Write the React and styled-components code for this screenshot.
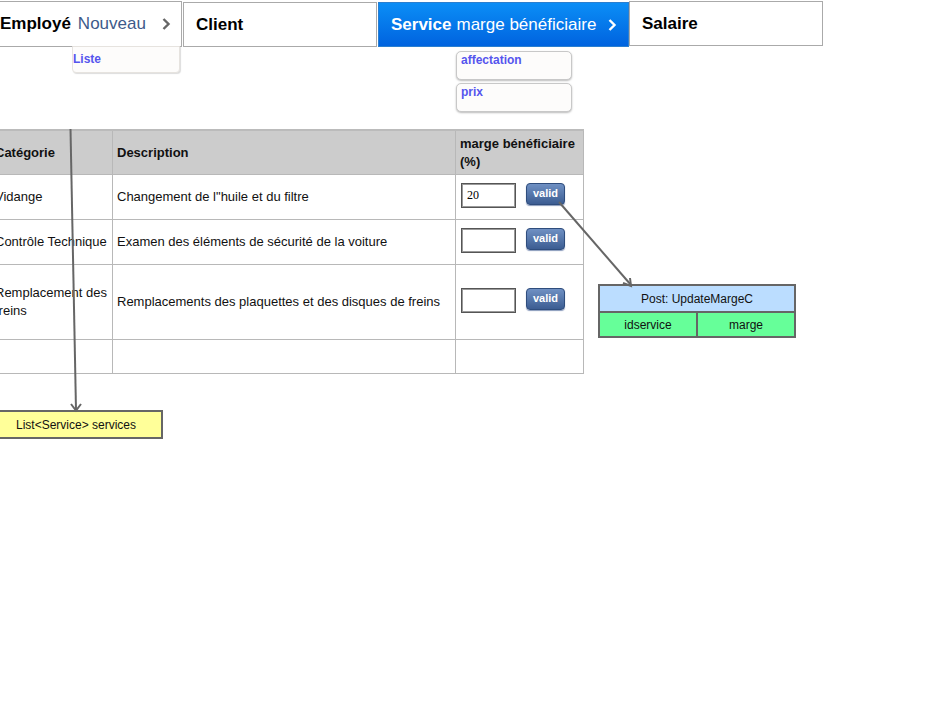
import styled, { createGlobalStyle } from 'styled-components'

const GlobalStyle = createGlobalStyle`
  html, body {
    margin: 0;
    padding: 0;
    background: #ffffff;
    font-family: "Liberation Sans", Arial, sans-serif;
  }
`

const Page = styled.div`
  position: relative;
  width: 930px;
  height: 716px;
  overflow: hidden;
`

const Shift = styled.div`
  margin-left: -12px;
`

const TabBar = styled.div`
  display: flex;
  align-items: flex-start;
  padding-top: 1px;
`

const Tab = styled.div`
  position: relative;
  box-sizing: border-box;
  flex-shrink: 0;
  display: flex;
  align-items: center;
  white-space: nowrap;
  width: ${(p) => p.$width}px;
  height: ${(p) => p.$height || 45}px;
  margin-top: ${(p) => p.$top || 0}px;
  margin-left: ${(p) => p.$gap || 0}px;
  padding: 0 ${(p) => p.$pad || 12}px;
  border: 1px solid ${(p) => (p.$active ? '#2a7fd0' : '#aaaaaa')};
  background: ${(p) =>
    p.$active ? 'linear-gradient(to bottom, #0b8ef6, #0063df)' : '#ffffff'};
  color: ${(p) => (p.$active ? '#ffffff' : '#000000')};
  font-size: 17px;
`

const Strong = styled.span`
  flex-shrink: 0;
  font-weight: bold;
`

const Sub = styled.span`
  flex-shrink: 0;
  color: ${(p) => (p.$light ? '#ffffff' : '#3d5a8a')};
  margin-left: ${(p) => (p.$light ? 5 : 7)}px;
`

const Chevron = styled.svg`
  flex-shrink: 0;
  margin-left: auto;
  margin-right: -1px;
`

const Menu = styled.div`
  position: absolute;
  left: ${(p) => p.$left}px;
  top: ${(p) => p.$top}px;
  display: flex;
  flex-direction: column;
  gap: 3px;
  z-index: 2;
`

const MenuItem = styled.div`
  box-sizing: border-box;
  width: ${(p) => p.$width}px;
  height: ${(p) => p.$height}px;
  padding: ${(p) => (p.$flat ? '5px 0 0' : '1px 4px')};
  background: #fdfcfb;
  border: 1px solid ${(p) => (p.$flat ? '#e6e3df' : '#c8c8c8')};
  border-radius: ${(p) => (p.$flat ? '0 0 4px 4px' : '5px')};
  box-shadow: ${(p) => (p.$flat ? '1px 1px 1px #dddddd' : '0 1px 2px #bbbbbb')};
  color: #5555ee;
  font-size: 12px;
  font-weight: bold;
  line-height: 14px;
`

const Table = styled.table`
  margin-top: 82px;
  margin-left: 2px;
  width: 593px;
  border-collapse: collapse;
  table-layout: fixed;
  font-size: 13px;
  color: #111111;
`

const HeadCell = styled.th`
  height: 43px;
  padding: 0 2px 0 4px;
  text-align: left;
  vertical-align: middle;
  background: #cccccc;
  border: 1px solid #b8b8b8;
  border-top: 2px solid #bbbbbb;
  font-weight: bold;
  line-height: 18px;
`

const Row = styled.tr`
  height: ${(p) => p.$height}px;
`

const Cell = styled.td`
  padding: 0 2px 0 4px;
  vertical-align: middle;
  border: 1px solid #b8b8b8;
  line-height: 18px;
`

const MargeBox = styled.div`
  display: flex;
  align-items: flex-start;
  gap: 10px;
  margin-top: -3px;
  padding-left: 1px;
`

const Input = styled.input`
  box-sizing: border-box;
  width: 55px;
  height: 25px;
  padding: 0 5px;
  border: 1px solid #555555;
  box-shadow: inset 0 0 0 1px #9a9a9a;
  font-family: "Liberation Serif", "Times New Roman", serif;
  font-size: 12px;
  color: #000000;
  outline: none;
`

const ValidButton = styled.button`
  box-sizing: border-box;
  width: 39px;
  height: 22px;
  padding: 0 0 3px;
  border: 1px solid #2f4d7d;
  border-radius: 4px;
  background: linear-gradient(to bottom, #6f90c3, #3c5d92);
  box-shadow: 0 1px 1px #8899bb;
  color: #ffffff;
  font-family: "Liberation Sans", Arial, sans-serif;
  font-size: 11px;
  font-weight: bold;
`

const Note = styled.div`
  position: absolute;
  left: ${(p) => p.$left}px;
  top: ${(p) => p.$top}px;
  box-sizing: border-box;
  width: ${(p) => p.$width}px;
  border: 2px solid #666666;
  font-size: 12px;
  color: #111111;
  z-index: 3;
`

const NoteRow = styled.div`
  display: flex;
  border-top: 2px solid #666666;
`

const NoteCell = styled.div`
  flex: 1;
  height: ${(p) => p.$height || 26}px;
  display: flex;
  align-items: center;
  justify-content: center;
  background: ${(p) => p.$bg};
  & + & {
    border-left: 2px solid #666666;
  }
`

const Links = styled.svg`
  position: absolute;
  left: 0;
  top: 0;
  pointer-events: none;
  z-index: 4;
`

const services = [
  { id: 1, cat: 'Vidange', desc: 'Changement de l"huile et du filtre', marge: '20', h: 45 },
  { id: 2, cat: 'Contrôle Technique', desc: 'Examen des éléments de sécurité de la voiture', marge: '', h: 45 },
  { id: 3, cat: 'Remplacement des freins', desc: 'Remplacements des plaquettes et des disques de freins', marge: '', h: 75 },
]

const ChevronIcon = ({ color }) => (
  <Chevron width="10" height="14" viewBox="0 0 10 14">
    <polyline points="2.5,2 7.5,7 2.5,12" fill="none" stroke={color} strokeWidth="2.4" />
  </Chevron>
)

const App = () => {
  return (
    <Page>
      <GlobalStyle />
      <Shift>
        <TabBar>
          <Tab $width={194} $height={46} $pad={11}>
            <Strong>Employé</Strong>
            <Sub>Nouveau</Sub>
            <ChevronIcon color="#666666" />
            <Menu $left={83} $top={44}>
              <MenuItem $width={108} $height={27} $flat>Liste</MenuItem>
            </Menu>
          </Tab>
          <Tab $width={194} $top={1} $gap={1}>
            <Strong>Client</Strong>
          </Tab>
          <Tab $width={251} $top={1} $gap={1} $active>
            <Strong>Service</Strong>
            <Sub $light>marge bénéficiaire</Sub>
            <ChevronIcon color="#ffffff" />
            <Menu $left={77} $top={48}>
              <MenuItem $width={116} $height={29}>affectation</MenuItem>
              <MenuItem $width={116} $height={29}>prix</MenuItem>
            </Menu>
          </Tab>
          <Tab $width={194}>
            <Strong>Salaire</Strong>
          </Tab>
        </TabBar>

        <Table>
          <colgroup>
            <col style={{ width: 122 }} />
            <col style={{ width: 343 }} />
            <col style={{ width: 128 }} />
          </colgroup>
          <thead>
            <tr>
              <HeadCell>Catégorie</HeadCell>
              <HeadCell>Description</HeadCell>
              <HeadCell>marge bénéficiaire (%)</HeadCell>
            </tr>
          </thead>
          <tbody>
            {services.map((s) => (
              <Row key={s.id} $height={s.h}>
                <Cell>{s.cat}</Cell>
                <Cell>{s.desc}</Cell>
                <Cell>
                  <MargeBox>
                    <Input defaultValue={s.marge} />
                    <ValidButton>valid</ValidButton>
                  </MargeBox>
                </Cell>
              </Row>
            ))}
            <Row $height={34}>
              <Cell />
              <Cell />
              <Cell />
            </Row>
          </tbody>
        </Table>
      </Shift>

      <Note $left={-11} $top={410} $width={174}>
        <NoteCell $bg="#ffff99" $height={25}>List&lt;Service&gt; services</NoteCell>
      </Note>

      <Note $left={598} $top={284} $width={198}>
        <NoteCell $bg="#bbddff" $height={25}>Post: UpdateMargeC</NoteCell>
        <NoteRow>
          <NoteCell $bg="#66ff99" $height={23}>idservice</NoteCell>
          <NoteCell $bg="#66ff99" $height={23}>marge</NoteCell>
        </NoteRow>
      </Note>

      <Links width="930" height="716">
        <g stroke="#666666" strokeWidth="2" fill="none">
          <line x1="70.5" y1="129" x2="76" y2="410" />
          <polyline points="71,404 76,410.5 81,404" />
          <line x1="559" y1="202" x2="631" y2="285" />
          <polyline points="623,283 631,286 630,278" />
        </g>
      </Links>
    </Page>
  )
}

export default App
